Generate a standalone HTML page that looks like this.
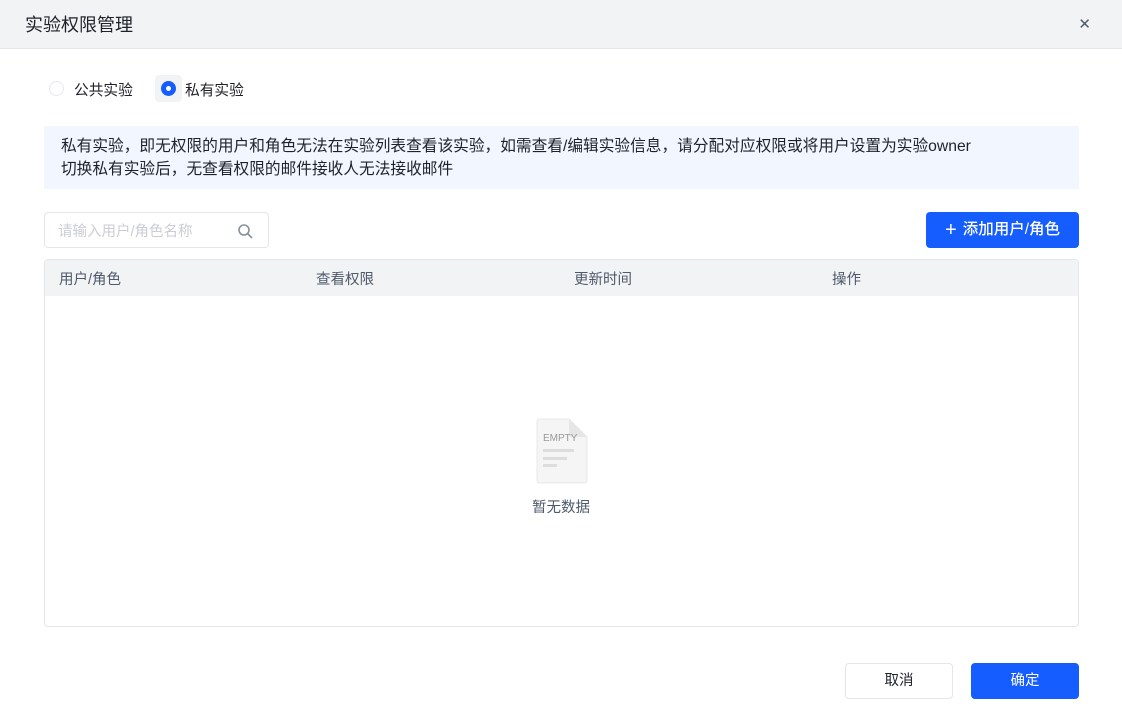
<!DOCTYPE html>
<html><head><meta charset="utf-8"><style>
*{box-sizing:border-box;margin:0;padding:0}
body{width:1122px;height:723px;background:#fff;font-family:"Liberation Sans","Noto Sans CJK SC",sans-serif;color:#1d2129;position:relative;overflow:hidden}
.hdr{position:absolute;left:0;top:0;width:1122px;height:49px;background:#f2f3f5;border-bottom:1px solid #e5e6eb}
.hdr .t{position:absolute;left:25px;top:11px;font-size:18px;color:#1d2129}
.hdr .x{position:absolute;right:31px;top:15px;font-size:15px;color:#4e5969}
.abs{position:absolute}
.radio{width:15px;height:15px;border-radius:50%;border:1px solid #e5e6eb;background:#fff}
.tip{left:44px;top:126px;width:1035px;height:63px;background:#f2f7ff;font-size:15.7px;line-height:23px;padding:9px 17px;color:#1d2129;white-space:nowrap}
.search{left:44px;top:212px;width:225px;height:36px;border:1px solid #e5e6eb;border-radius:4px;font-size:14.5px;color:#c9cdd4;padding:7px 13px}
.btn{border-radius:4px;font-size:14.5px;text-align:center}
.table{left:44px;top:259px;width:1035px;height:368px;border:1px solid #e5e6eb;border-radius:4px;overflow:hidden}
.th{height:36px;background:#f2f3f5;font-size:14.5px;color:#4e5969;position:relative}
.th span{position:absolute;top:8px}
</style></head><body>
<div class="hdr"><div class="t">实验权限管理</div><div class="x">✕</div></div>
<div class="abs radio" style="left:49px;top:81px"></div>
<div class="abs" style="left:74px;top:79px;font-size:14.7px">公共实验</div>
<div class="abs" style="left:155px;top:75px;width:27px;height:27px;background:#f2f3f5;border-radius:4px"></div>
<div class="abs" style="left:161px;top:81px;width:15px;height:15px;border-radius:50%;background:#165dff"><div style="position:absolute;left:5px;top:5px;width:5px;height:5px;border-radius:50%;background:#fff"></div></div>
<div class="abs" style="left:185px;top:79px;font-size:14.7px">私有实验</div>
<div class="abs tip">私有实验，即无权限的用户和角色无法在实验列表查看该实验，如需查看/编辑实验信息，请分配对应权限或将用户设置为实验owner<br>切换私有实验后，无查看权限的邮件接收人无法接收邮件</div>
<div class="abs search">请输入用户/角色名称
<svg style="position:absolute;right:15px;top:10px" width="16" height="16" viewBox="0 0 16 16"><circle cx="7" cy="7" r="5" fill="none" stroke="#86909c" stroke-width="1.6"/><path d="M11 11l4 4" stroke="#86909c" stroke-width="1.6"/></svg></div>
<div class="abs btn" style="left:926px;top:212px;width:153px;height:36px;background:#165dff;color:#fff;font-size:15.5px;line-height:36px;font-weight:500"><span style="font-size:20px;vertical-align:-2px;margin-right:6px">+</span>添加用户/角色</div>
<div class="abs table"><div class="th"><span style="left:14px">用户/角色</span><span style="left:271px">查看权限</span><span style="left:529px">更新时间</span><span style="left:787px">操作</span></div></div>
<svg class="abs" style="left:536px;top:418px" width="52" height="66" viewBox="0 0 52 66"><path d="M3 1h30l18 18v44a2 2 0 0 1-2 2H3a2 2 0 0 1-2-2V3a2 2 0 0 1 2-2z" fill="#f5f5f5" stroke="#e8e8e8"/><path d="M33 1v16a2 2 0 0 0 2 2h16z" fill="#e6e6e6"/><text x="7" y="23" font-size="10" fill="#999" font-family="Liberation Sans">EMPTY</text><rect x="7" y="31" width="31" height="3" fill="#ddd"/><rect x="7" y="39" width="24" height="3" fill="#ddd"/><rect x="7" y="46" width="14" height="3" fill="#ddd"/></svg>
<div class="abs" style="left:532px;top:496px;font-size:14.5px;color:#4e5969">暂无数据</div>
<div class="abs btn" style="left:845px;top:663px;width:108px;height:36px;border:1px solid #e5e6eb;line-height:34px">取消</div>
<div class="abs btn" style="left:971px;top:663px;width:108px;height:36px;background:#165dff;color:#fff;line-height:36px">确定</div>
</body></html>
